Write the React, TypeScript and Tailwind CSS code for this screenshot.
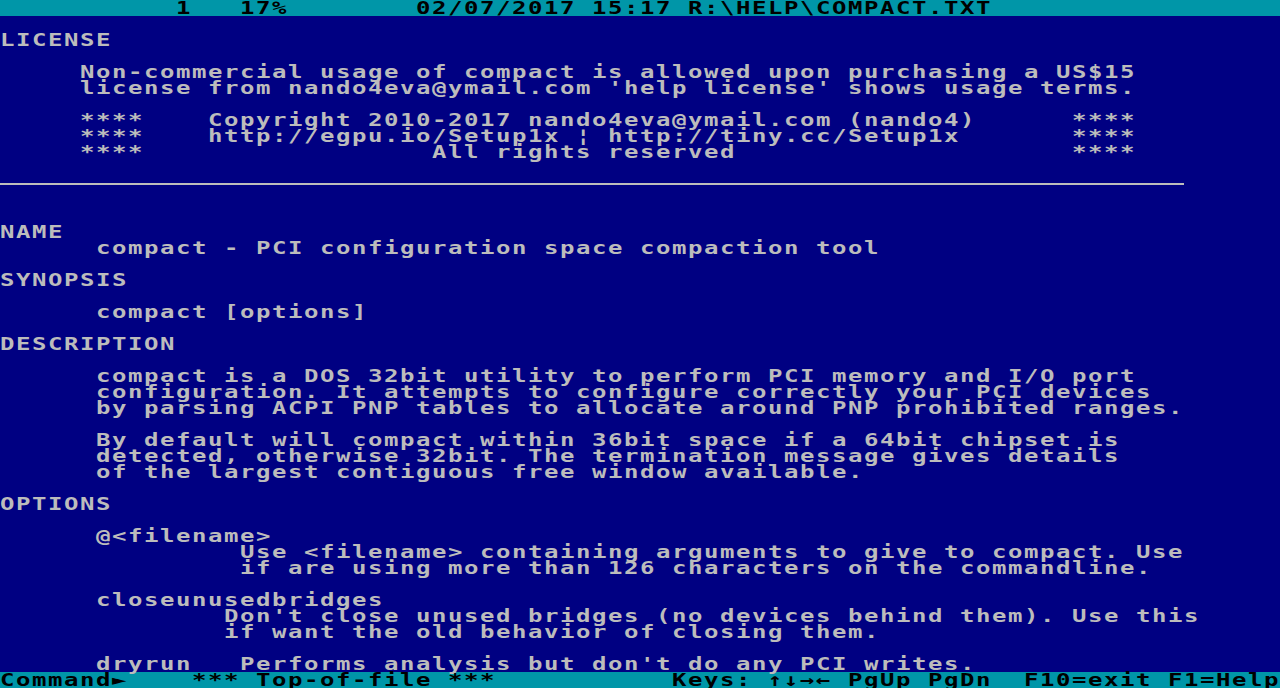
const seg = (parts: [number, string][]) => {
  let s = "";
  for (const [col, text] of parts) {
    s = s.padEnd(col, " ") + text;
  }
  return s;
};

type Row = { text?: string; rule?: boolean };

const rows: Row[] = [
  {},
  { text: "LICENSE" },
  {},
  { text: seg([[5, "Non-commercial usage of compact is allowed upon purchasing a US$15"]]) },
  { text: seg([[5, "license from nando4eva@ymail.com 'help license' shows usage terms."]]) },
  {},
  { text: seg([[5, "****"], [13, "Copyright 2010-2017 nando4eva@ymail.com (nando4)"], [67, "****"]]) },
  { text: seg([[5, "****"], [13, "http://egpu.io/Setup1x ¦ http://tiny.cc/Setup1x"], [67, "****"]]) },
  { text: seg([[5, "****"], [27, "All rights reserved"], [67, "****"]]) },
  {},
  { rule: true },
  {},
  {},
  { text: "NAME" },
  { text: seg([[6, "compact - PCI configuration space compaction tool"]]) },
  {},
  { text: "SYNOPSIS" },
  {},
  { text: seg([[6, "compact [options]"]]) },
  {},
  { text: "DESCRIPTION" },
  {},
  { text: seg([[6, "compact is a DOS 32bit utility to perform PCI memory and I/O port"]]) },
  { text: seg([[6, "configuration. It attempts to configure correctly your PCI devices"]]) },
  { text: seg([[6, "by parsing ACPI PNP tables to allocate around PNP prohibited ranges."]]) },
  {},
  { text: seg([[6, "By default will compact within 36bit space if a 64bit chipset is"]]) },
  { text: seg([[6, "detected, otherwise 32bit. The termination message gives details"]]) },
  { text: seg([[6, "of the largest contiguous free window available."]]) },
  {},
  { text: "OPTIONS" },
  {},
  { text: seg([[6, "@<filename>"]]) },
  { text: seg([[15, "Use <filename> containing arguments to give to compact. Use"]]) },
  { text: seg([[15, "if are using more than 126 characters on the commandline."]]) },
  {},
  { text: seg([[6, "closeunusedbridges"]]) },
  { text: seg([[14, "Don't close unused bridges (no devices behind them). Use this"]]) },
  { text: seg([[14, "if want the old behavior of closing them."]]) },
  {},
  { text: seg([[6, "dryrun"], [15, "Performs analysis but don't do any PCI writes."]]) },
];

const topBar = seg([[11, "1"], [15, "17%"], [26, "02/07/2017 15:17 R:\\HELP\\COMPACT.TXT"]]);
const bottomBar = seg([
  [0, "Command►"],
  [12, "*** Top-of-file ***"],
  [42, "Keys: ↑↓→← PgUp PgDn"],
  [64, "F10=exit F1=Help"],
]);

export default function App() {
  return (
    <div className="w-[1280px] h-[688px] overflow-hidden bg-[#000082]">
      <div className="w-[960px] origin-top-left scale-x-[1.333333] font-['DejaVu_Sans_Mono',monospace] font-bold text-[18px] leading-4 tracking-[1.163px] text-[#bcbcbc]">
        <div className="h-4 whitespace-pre bg-[#0096a8] text-black">{topBar}</div>
        {rows.map((r, i) =>
          r.rule ? (
            <div key={i} className="h-4 flex items-center">
              <div className="w-[888px] h-[2px] bg-[#bcbcbc]" />
            </div>
          ) : (
            <div key={i} className="h-4 whitespace-pre">
              {r.text ?? ""}
            </div>
          )
        )}
        <div className="h-4 whitespace-pre bg-[#0096a8] text-black">{bottomBar}</div>
      </div>
    </div>
  );
}
